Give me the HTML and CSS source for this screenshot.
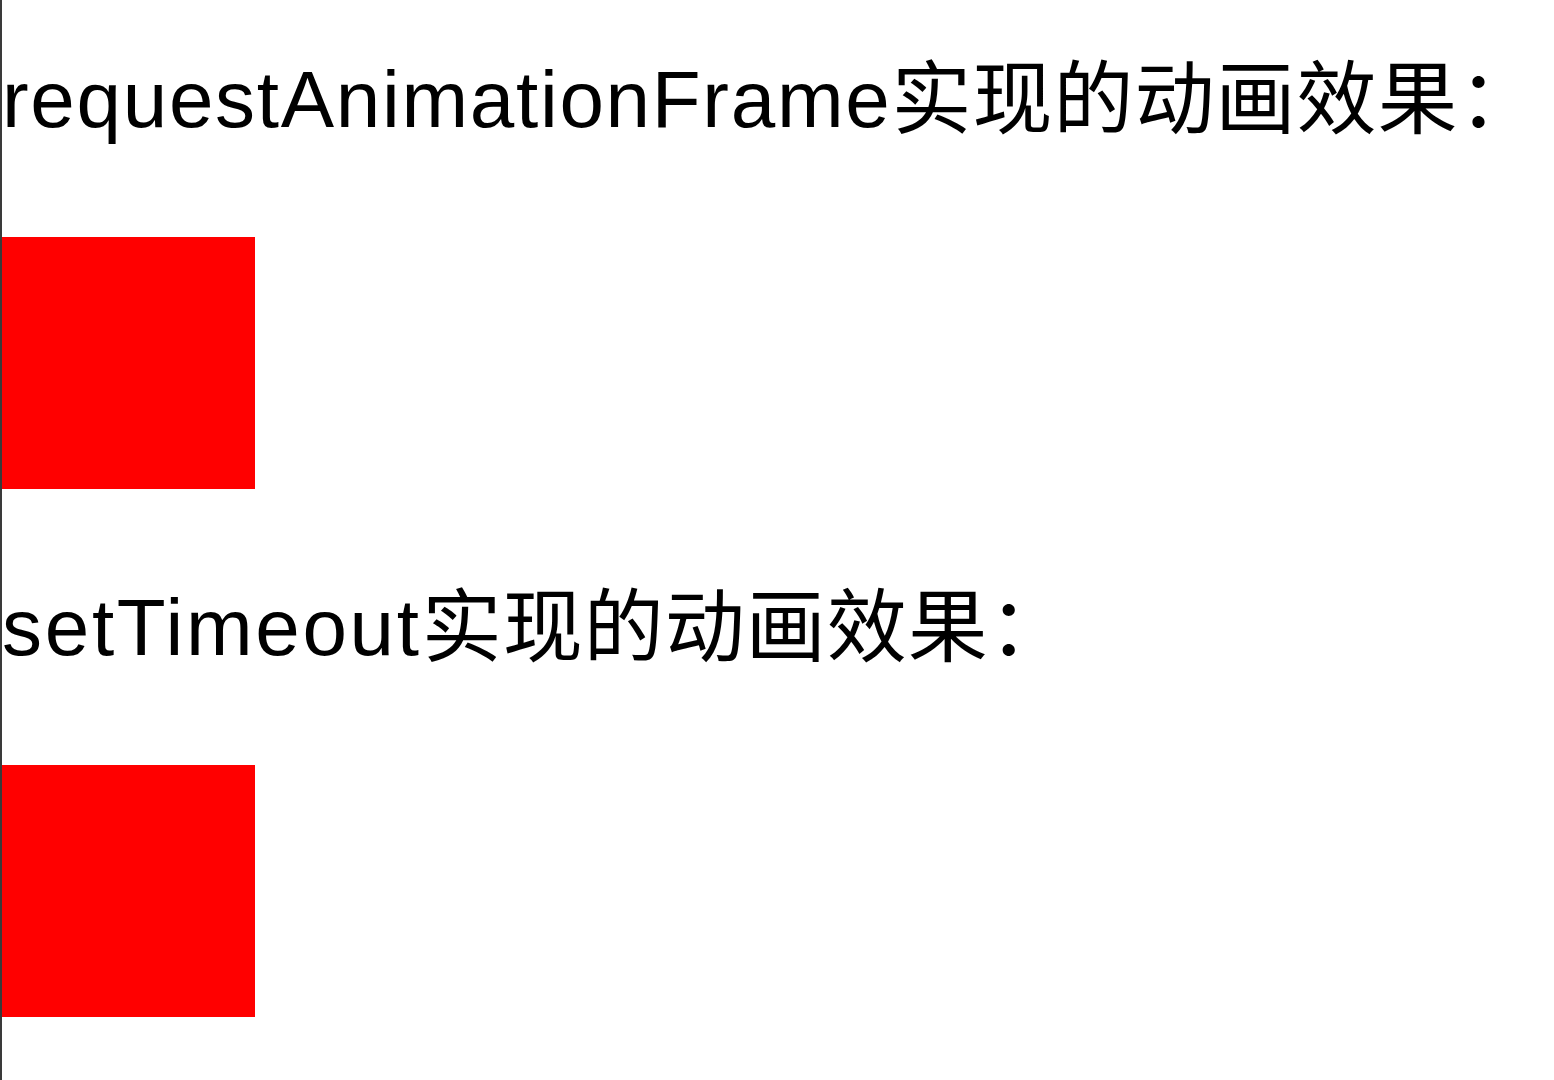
FILE: index.html
```html
<!DOCTYPE html>
<html lang="zh-CN">
<head>
<meta charset="utf-8">
<title>动画效果</title>
<link rel="stylesheet" href="styles.css">
</head>
<body>
<main class="page">
  <p class="title"><span class="latin">requestAnimationFrame</span><span class="cjk">实现的动画效果：</span></p>
  <div class="box"></div>
  <p class="title"><span class="latin latin-wide">setTimeout</span><span class="cjk">实现的动画效果：</span></p>
  <div class="box"></div>
</main>
</body>
</html>
```
FILE: styles.css
```css
html, body {
  margin: 0;
  padding: 0;
  background: #ffffff;
}
body {
  height: 1080px;
  overflow: hidden;
}
.page {
  box-sizing: border-box;
  min-height: 1080px;
  border-left: 2px solid #3a3a3a;
  padding-top: 50px;
  display: flex;
  flex-direction: column;
  align-items: flex-start;
  font-family: "Liberation Sans", "Noto Sans CJK SC", sans-serif;
  color: #000;
}
.title {
  flex-shrink: 0;
  margin: 0 0 87px;
  font-size: 80px;
  line-height: 100px;
  white-space: nowrap;
}
.latin {
  letter-spacing: 1.7px;
}
.latin-wide {
  letter-spacing: 2.7px;
}
.cjk {
  letter-spacing: 1px;
}
.box {
  flex-shrink: 0;
  width: 253px;
  height: 252px;
  background: #ff0000;
  margin-bottom: 89px;
}
```
